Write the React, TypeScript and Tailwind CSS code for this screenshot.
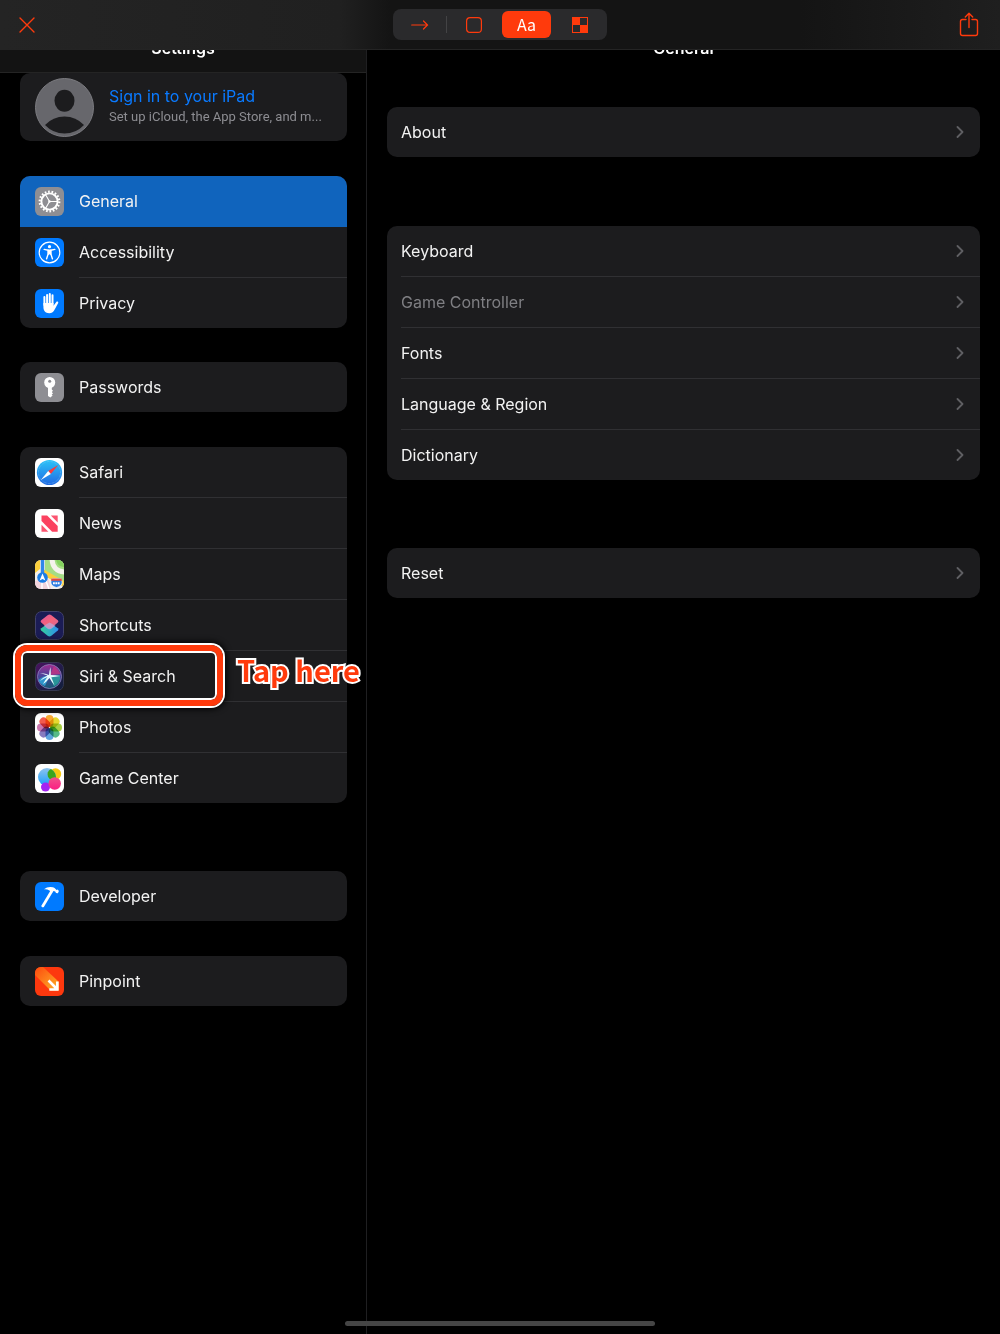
import type { ReactNode } from "react"

const tile = "w-[29px] h-[29px] shrink-0 rounded-[6px]"

function GearIcon() {
  return (
    <svg viewBox="0 0 29 29" className={tile} fill="none" stroke="#fff">
      <rect width="29" height="29" fill="#8e8e93" stroke="none" />
      <circle cx="14.5" cy="14.5" r="9.8" strokeWidth="2.2" strokeDasharray="1.7 1.72" />
      <circle cx="14.5" cy="14.5" r="8.1" strokeWidth="1.9" />
      <path d="M14.5 14.5H22M14.5 14.5l-4-7M14.5 14.5l-4 7" strokeWidth="1.1" />
      <circle cx="14.5" cy="14.5" r="1.2" fill="#fff" stroke="none" />
    </svg>
  )
}

function AccessibilityIcon() {
  return (
    <svg viewBox="0 0 29 29" className={tile}>
      <rect width="29" height="29" fill="#007aff" />
      <circle cx="14.5" cy="14.5" r="10.3" fill="none" stroke="#fff" strokeWidth="1.2" />
      <circle cx="14.5" cy="8.7" r="1.6" fill="#fff" />
      <path
        d="M9.2 11.4l4 .8v3.6l-1.6 5M19.8 11.4l-4 .8v3.6l1.6 5"
        fill="none"
        stroke="#fff"
        strokeWidth="1.4"
        strokeLinecap="round"
        strokeLinejoin="round"
      />
      <path d="M12.6 11.6h3.8v4.8l-.8.6-1.1-.8-1.1.8-.8-.6z" fill="#fff" />
    </svg>
  )
}

function HandIcon() {
  return (
    <svg viewBox="0 0 29 29" className={tile}>
      <rect width="29" height="29" fill="#007aff" />
      <path
        d="M9.4 8v8M12.1 5.9V15M14.8 5V15M17.5 6.2V15"
        fill="none"
        stroke="#fff"
        strokeLinecap="round"
        strokeWidth="2"
      />
      <path
        d="M8.4 14h10.1v2.8l2.8-3.7c.8-1 2.3-.3 1.9.9l-3.4 6.2c-1.2 2.5-2.9 4-5.6 4-3.8 0-5.8-2.7-5.8-6.2z"
        fill="#fff"
      />
    </svg>
  )
}

function KeyIcon() {
  return (
    <svg viewBox="0 0 29 29" className={tile}>
      <rect width="29" height="29" fill="#8e8e93" />
      <circle cx="14.7" cy="9.5" r="5.5" fill="#fff" />
      <path d="M13 13h3.8v3.6l1.2 1.2-1.2 1.3 1.2 1.3-1.3 1.2.9 1-2.2 2-2.4-1.7z" fill="#fff" />
      <circle cx="14.7" cy="8.2" r="1.5" fill="#8e8e93" />
    </svg>
  )
}

function SafariIcon() {
  return (
    <svg viewBox="0 0 29 29" className={tile}>
      <defs>
        <linearGradient id="safari" x1="0" y1="0" x2="0" y2="1">
          <stop offset="0" stopColor="#2cc4f8" />
          <stop offset="1" stopColor="#2069e3" />
        </linearGradient>
      </defs>
      <rect width="29" height="29" fill="#fff" />
      <circle cx="14.5" cy="14.5" r="12.6" fill="url(#safari)" />
      <circle cx="14.5" cy="14.5" r="11" fill="none" stroke="#8fd0f8" strokeWidth=".8" strokeDasharray=".5 .9" />
      <path d="M23.2 7l-10 6 2.600 3z" fill="#fb3b3b" />
      <path d="M5.800 22l7.400-9 2.600 3z" fill="#fff" />
    </svg>
  )
}

function NewsIcon() {
  return (
    <svg viewBox="0 0 29 29" className={tile}>
      <rect width="29" height="29" fill="#fff" />
      <path d="M6.5 6.5h5.6l10.6 10.6v5.6h-5.600l-10.600-10.600z" fill="#fb4260" />
      <path d="M15.8 6.5h6.900v6.900z" fill="#fb5470" />
      <path d="M6.5 15.8v6.900h6.900z" fill="#fb5470" />
    </svg>
  )
}

function MapsIcon() {
  return (
    <svg viewBox="0 0 29 29" className={tile}>
      <rect width="29" height="29" fill="#f3efe9" />
      <path d="M0 0h5v9L0 13z" fill="#fbcf3d" />
      <path d="M10 0h19v22L10 11z" fill="#a5dd84" />
      <path d="M17 -2c0 9 5 14 14 14" fill="none" stroke="#f5f3ec" strokeWidth="5" />
      <path d="M21 -1c1 5 3 8 9 8V-1z" fill="#84d15e" />
      <path d="M8 12l21 12" stroke="#fbcf3d" strokeWidth="5" />
      <path d="M0 21l13-3 3 11H0z" fill="#f1d3dc" />
      <path d="M7 22v7M11 21l3 8" stroke="#fff" strokeWidth="1.5" />
      <path d="M7.5 0v17" stroke="#2f86ea" strokeWidth="3.4" />
      <circle cx="7.5" cy="17.5" r="5.3" fill="#1b7ee6" />
      <path d="M7.5 13.5l2.9 7-2.900-1.500-2.900 1.500z" fill="#fff" />
      <path
        d="M17 18.500h9l1.200 3.500c0 3-2 4.500-5.700 5.500-3.700-1-5.700-2.500-5.700-5.500z"
        fill="#2d7de0"
        stroke="#fff"
        strokeWidth=".7"
      />
      <path d="M16.500 18.500h10l.6 2.300h-11.200z" fill="#e4483f" />
      <path d="M18 23.300h7" stroke="#fff" strokeWidth="2" strokeDasharray="1.800 .6" />
    </svg>
  )
}

function ShortcutsIcon() {
  return (
    <svg viewBox="0 0 29 29" className={tile}>
      <defs>
        <linearGradient id="scTop" x1="0" y1="0" x2="1" y2="1">
          <stop offset="0" stopColor="#e0559f" />
          <stop offset=".5" stopColor="#f5637a" />
          <stop offset="1" stopColor="#d0699e" />
        </linearGradient>
        <linearGradient id="scBottom" x1="0" y1="0" x2="1" y2="0">
          <stop offset="0" stopColor="#35cf9a" />
          <stop offset="1" stopColor="#2e8ff0" />
        </linearGradient>
      </defs>
      <rect x=".5" y=".5" width="28" height="28" rx="6" fill="#1b1c55" stroke="#41426a" />
      <path
        d="M14.5 11.500l8.300 5.800q1.300 1 0 2.200l-6.400 5.200q-1.900 1.400-3.800 0l-6.400-5.200q-1.300-1.200 0-2.200z"
        fill="url(#scBottom)"
      />
      <path
        d="M12.600 4.300q1.900-1.400 3.800 0l6.400 5q1.300 1.100 0 2.200l-6.400 5.500q-1.900 1.400-3.800 0l-6.400-5.500q-1.300-1.100 0-2.200z"
        fill="url(#scTop)"
      />
      <path d="M14.500 11.500l6 3.300-4.100 3q-1.900 1-3.800 0l-3.800-3z" fill="#b9a9dd" opacity=".7" />
    </svg>
  )
}

function SiriIcon() {
  return (
    <svg viewBox="0 0 29 29" className={tile}>
      <defs>
        <linearGradient id="siriBg" x1="0" y1="0" x2="1" y2="1">
          <stop offset="0" stopColor="#4d1260" />
          <stop offset=".5" stopColor="#251b4b" />
          <stop offset="1" stopColor="#101f3b" />
        </linearGradient>
        <linearGradient id="siriOrb" x1="0" y1="0" x2="0" y2="1">
          <stop offset="0" stopColor="#a12c8f" />
          <stop offset=".45" stopColor="#4d439c" />
          <stop offset="1" stopColor="#155a72" />
        </linearGradient>
      </defs>
      <rect x=".5" y=".5" width="28" height="28" rx="6" fill="url(#siriBg)" stroke="#35384f" />
      <circle cx="14.500" cy="14.500" r="12" fill="url(#siriOrb)" stroke="#8f83bd" strokeWidth=".8" />
      <path d="M3.500 18q6-5 11-4L10 24q-5-2-6.500-6z" fill="#2ea6dc" opacity=".8" />
      <path d="M14.500 14l10.500-1q1 8-6 11.500z" fill="#25b0a0" opacity=".7" />
      <path d="M15 13l4-9q5 4 6.500 8z" fill="#c33582" opacity=".8" />
      <path
        d="M5 11q6 .5 9 2Q14.500 8 15.500 5q.3 5 .3 8 4 0 9.200 1-5 .7-8.700 1.200 1.700 4 3.200 8.300-3-4-5-7.500-3 4-6.500 6 2-4 4.500-7-4 1.500-7.500 4 3.500-4 7.500-5.500Q9 12 5 11z"
        fill="#e9fbff"
      />
    </svg>
  )
}

const petals = ["#f9a01b", "#e3d519", "#9fcb2f", "#45b37a", "#4e9bdc", "#7a6cb8", "#c468a6", "#f2483a"]

function PhotosIcon() {
  return (
    <svg viewBox="0 0 29 29" className={tile}>
      <rect width="29" height="29" fill="#fff" />
      {petals.map((color, i) => (
        <rect
          key={color}
          x="10.5"
          y="2"
          width="8"
          height="12"
          rx="4"
          fill={color}
          opacity=".9"
          transform={`rotate(${i * 45} 14.5 14.5)`}
          className="mix-blend-multiply"
        />
      ))}
    </svg>
  )
}

function GameCenterIcon() {
  return (
    <svg viewBox="0 0 29 29" className={tile}>
      <defs>
        <linearGradient id="gcBlue" x1="0" y1="0" x2="0" y2="1">
          <stop offset="0" stopColor="#8fc3ee" />
          <stop offset="1" stopColor="#169ffb" />
        </linearGradient>
        <linearGradient id="gcPink" x1="0" y1="0" x2="0" y2="1">
          <stop offset="0" stopColor="#f0528c" />
          <stop offset="1" stopColor="#fb1e83" />
        </linearGradient>
      </defs>
      <rect width="29" height="29" fill="#fff" />
      <circle cx="20.5" cy="10" r="5.7" fill="#f6ca12" />
      <circle cx="12" cy="13" r="9" fill="url(#gcBlue)" />
      <path d="M16 5a5.700 5.700 0 0 0 4.500 10.700a9 9 0 0 0-4.500-10.700z" fill="#3aa51c" />
      <circle cx="10.500" cy="23" r="4.500" fill="#a325f2" />
      <circle cx="19.700" cy="19.500" r="6.200" fill="url(#gcPink)" />
    </svg>
  )
}

function HammerIcon() {
  return (
    <svg viewBox="0 0 29 29" className={tile}>
      <rect width="29" height="29" fill="#007aff" />
      <path d="M15.500 8.500l2.500 1.200-9 15q-.7 1-1.800.5-1.200-.6-.7-1.800z" fill="#fff" />
      <path
        d="M9 7.300q3.800-3.300 9-2.100 1.800.5 2.600 1.700l.9 1 1.200-.3 1.200 1.300-1 2.400-1.900-.2-.8-1.700-1.600-.3-1.100 1.100-3.600-1.900q-1.600-1.400-4.900-1z"
        fill="#fff"
      />
    </svg>
  )
}

function PinpointIcon() {
  return (
    <svg viewBox="0 0 29 29" className={tile}>
      <defs>
        <linearGradient id="beam" x1="0" y1="0" x2="1" y2="1">
          <stop offset="0" stopColor="#fd4a0f" />
          <stop offset=".7" stopColor="#fd9420" />
          <stop offset="1" stopColor="#fdac2c" />
        </linearGradient>
      </defs>
      <rect width="29" height="29" fill="#fd380e" />
      <path d="M0 8V0h8l16 15v8.500h-8.500z" fill="url(#beam)" />
      <path d="M13.500 13.500l8.500 8.500M22.300 14.500v8h-8" fill="none" stroke="#fff" strokeWidth="2.600" />
    </svg>
  )
}

function Chevron() {
  return (
    <svg width="8" height="12" viewBox="0 0 8 12" fill="none" stroke="#5f5f63" strokeWidth="1.8">
      <path d="M1.500 1L6.500 6l-5 5" strokeLinecap="round" strokeLinejoin="round" />
    </svg>
  )
}

type Item = { label: string; icon?: ReactNode; selected?: boolean; disabled?: boolean; marked?: boolean }

const privacyItems: Item[] = [
  { label: "General", icon: <GearIcon />, selected: true },
  { label: "Accessibility", icon: <AccessibilityIcon /> },
  { label: "Privacy", icon: <HandIcon /> },
]

const appItems: Item[] = [
  { label: "Safari", icon: <SafariIcon /> },
  { label: "News", icon: <NewsIcon /> },
  { label: "Maps", icon: <MapsIcon /> },
  { label: "Shortcuts", icon: <ShortcutsIcon /> },
  { label: "Siri & Search", icon: <SiriIcon />, marked: true },
  { label: "Photos", icon: <PhotosIcon /> },
  { label: "Game Center", icon: <GameCenterIcon /> },
]

const generalItems: Item[] = [
  { label: "Keyboard" },
  { label: "Game Controller", disabled: true },
  { label: "Fonts" },
  { label: "Language & Region" },
  { label: "Dictionary" },
]

// red frame and caption drawn over a row
function Marker() {
  return (
    <>
      <div className="pointer-events-none absolute -left-[5px] -top-1.5 z-10 h-[61px] w-[208px] rounded-xl border-6 border-[#ff3a0c] shadow-[0_0_0_2px_#fff,inset_0_0_0_2px_#fff,0_0_6px_3px_#000]" />
      <span className="pointer-events-none absolute -top-0.5 left-[217px] z-10 whitespace-nowrap font-['Noto_Sans_CJK_JP',sans-serif] text-[29px] leading-10 font-bold text-[#ff3a0c] [-webkit-text-stroke:4px_white] [paint-order:stroke_fill]">
        Tap here
      </span>
    </>
  )
}

function Group({ items, className = "" }: { items: Item[]; className?: string }) {
  return (
    <ul className={`rounded-[10px] bg-[#1c1c1e] ${className}`}>
      {items.map(({ label, icon, selected, disabled, marked }) => (
        <li key={label} className="group relative h-[51px] last:h-[50px]">
          <a
            href="#"
            aria-disabled={disabled}
            className={`flex h-full items-center gap-[15px] group-first:rounded-t-[10px] ${
              icon ? "pl-[15px]" : "pl-3.5"
            } ${selected ? "bg-[#1064bd]" : ""}`}
          >
            {icon}
            <span
              className={`flex h-full flex-1 items-center justify-between border-b group-last:border-b-0 ${
                selected ? "border-[#1064bd]" : "border-[#303033]"
              } ${icon ? "" : "pr-4"} ${disabled ? "text-[#7f7f83]" : "text-[#f2f2f2]"}`}
            >
              {label}
              {!icon && <Chevron />}
            </span>
          </a>
          {marked && <Marker />}
        </li>
      ))}
    </ul>
  )
}

function Toolbar() {
  return (
    <header className="sticky top-0 z-20 grid h-[50px] grid-cols-[1fr_auto_1fr] items-center border-b border-[#242424] bg-[linear-gradient(90deg,#242424_0%,#202020_34%,#141414_39%,#141414_80%,#1f1f1f_100%)] px-[19px] text-[#ff3a0c]">
      <button aria-label="Close" className="w-4">
        <svg width="16" height="16" viewBox="0 0 16 16" stroke="currentColor" strokeWidth="1.4" strokeLinecap="round">
          <path d="M1 1l14 14M15 1L1 15" />
        </svg>
      </button>
      <div className="flex h-[31px] items-center rounded-lg bg-[#2a2a2c]">
        <button aria-label="Arrow" className="flex w-[53px] justify-center">
          <svg width="18" height="10" viewBox="0 0 18 10" fill="none" stroke="currentColor" strokeWidth="1.2">
            <path d="M.7 5h16M12.500 1l4 4-4 4" strokeLinecap="round" strokeLinejoin="round" />
          </svg>
        </button>
        <span className="h-[17px] w-px bg-[#434345]" />
        <button aria-label="Rectangle" className="flex w-[53px] justify-center">
          <svg width="16" height="16" viewBox="0 0 16 16" fill="none" stroke="currentColor" strokeWidth="1.2">
            <rect x=".6" y=".6" width="14.8" height="14.8" rx="3.500" />
          </svg>
        </button>
        <button className="mx-0.5 h-[27px] w-[49px] rounded-md bg-[#ff3a0c] font-['Noto_Sans_CJK_JP',sans-serif] text-base leading-[27px] text-white">
          Aa
        </button>
        <button aria-label="Pixelate" className="flex w-[54px] justify-center">
          <svg width="16" height="16" viewBox="0 0 16 16" fill="currentColor">
            <rect x=".5" y=".5" width="15" height="15" fill="none" stroke="currentColor" />
            <path d="M0 0h8v8H0zM8 8h8v8H8z" />
          </svg>
        </button>
      </div>
      <button aria-label="Share" className="justify-self-end">
        <svg
          width="24"
          height="26"
          viewBox="0 0 24 26"
          fill="none"
          stroke="currentColor"
          strokeWidth="1.4"
          strokeLinecap="round"
          strokeLinejoin="round"
        >
          <path d="M9 7.500H5.500Q3.500 7.500 3.500 9.500v12q0 2 2 2h13q2 0 2-2V9.500q0-2-2-2H15" />
          <path d="M12 15.500V1.500M8.300 5L12 1.300 15.700 5" />
        </svg>
      </button>
    </header>
  )
}

export default function App() {
  return (
    <div className="relative flex min-h-screen flex-col bg-black font-[Inter,sans-serif] text-base text-white">
      <Toolbar />

      <div className="-mt-4 flex flex-1">
        <aside className="w-[367px] shrink-0 border-r border-[#1f1f21]">
          <h1 className="h-[39px] border-b border-[#242424] bg-[#131313] pt-0.5 text-center leading-6 font-semibold">
            Settings
          </h1>
          <nav className="px-5 pr-[19px]">
            <a href="#" className="flex h-[68px] items-center gap-[15px] rounded-[10px] bg-[#1c1c1e] px-[15px]">
              <svg viewBox="0 0 59 59" className="h-[59px] w-[59px] shrink-0">
                <circle cx="29.5" cy="29.5" r="29" fill="#67676c" stroke="#7c7c81" />
                <ellipse cx="29.5" cy="22.8" rx="10" ry="11" fill="#1c1c1e" />
                <path d="M10 47Q18 38.500 29.500 38.500T49 47Q41 55.500 29.500 55.500T10 47z" fill="#1c1c1e" />
              </svg>
              <span className="min-w-0 flex-1 pb-0.5">
                <span className="block leading-[22px] text-[#0a7aff]">Sign in to your iPad</span>
                <span className="block font-[Roboto,sans-serif] text-[13px] leading-5 whitespace-nowrap text-[#8d8d92]">
                  Set up iCloud, the App Store, and m...
                </span>
              </span>
            </a>
            <Group items={privacyItems} className="mt-[35px]" />
            <Group items={[{ label: "Passwords", icon: <KeyIcon /> }]} className="mt-[34px]" />
            <Group items={appItems} className="mt-[35px]" />
            <Group items={[{ label: "Developer", icon: <HammerIcon /> }]} className="mt-[68px]" />
            <Group items={[{ label: "Pinpoint", icon: <PinpointIcon /> }]} className="mt-[35px]" />
          </nav>
        </aside>

        <main className="flex-1 px-5">
          <h2 className="h-[39px] pt-0.5 text-center leading-6 font-semibold">General</h2>
          <Group items={[{ label: "About" }]} className="mt-[34px]" />
          <Group items={generalItems} className="mt-[69px]" />
          <Group items={[{ label: "Reset" }]} className="mt-[68px]" />
        </main>
      </div>

      <div className="absolute bottom-2 left-1/2 z-20 h-[5px] w-[31%] -translate-x-1/2 rounded-full bg-[#454545]" />
    </div>
  )
}
